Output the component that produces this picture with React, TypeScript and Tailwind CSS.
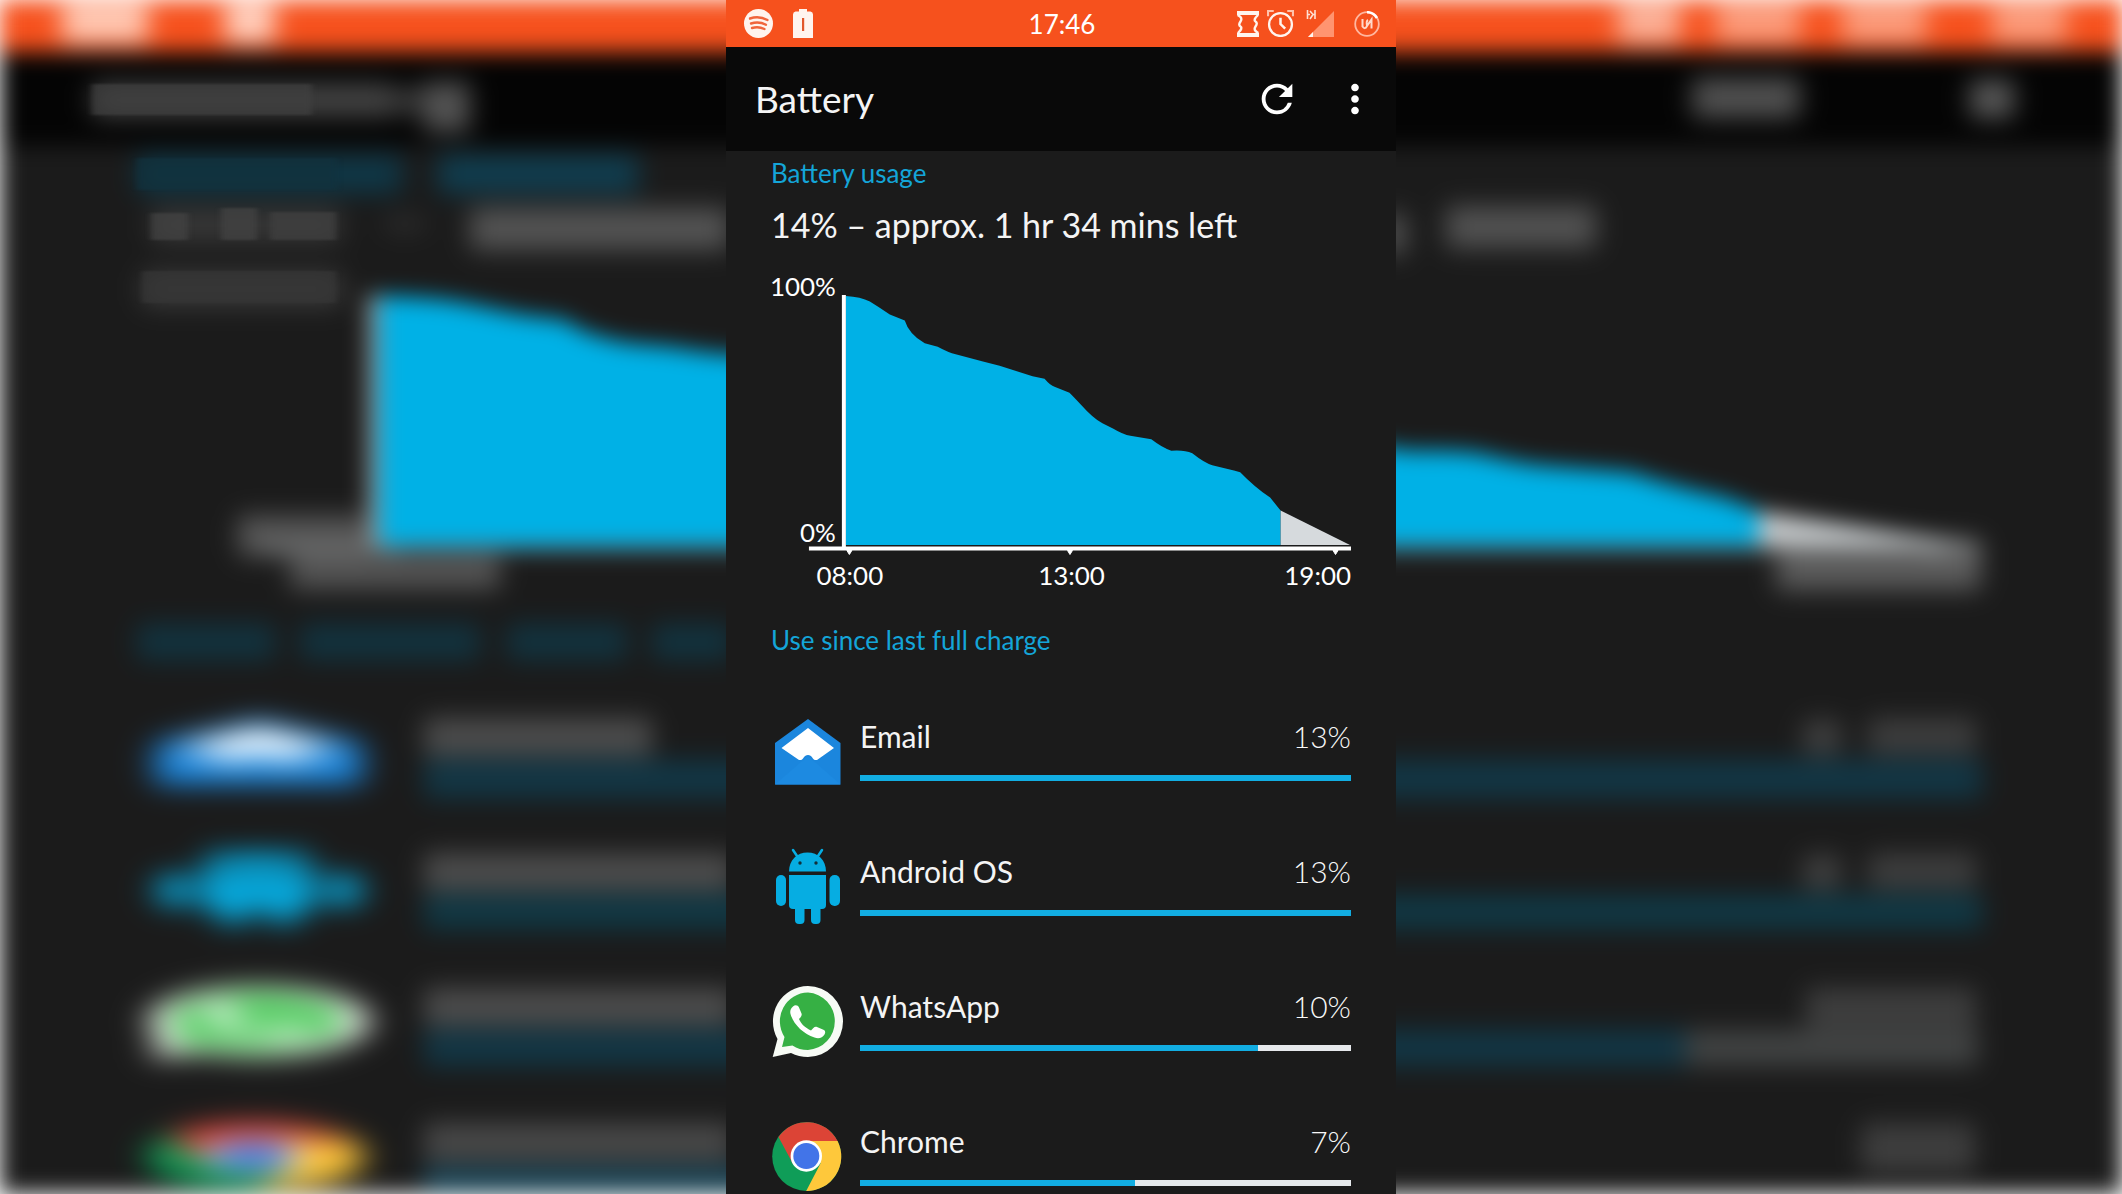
import type { ReactNode } from "react";
import { MdMoreVert, MdRefresh } from "react-icons/md";

/* ---------- Drawings shared by the screen and its blurred backdrop ---------- */

function EmailShape() {
  return (
    <>
      <path d="M37 3 69.5 27V68.5H4V27Z" fill="#1b86dd" />
      <path d="M4 68.5 37 40 69.5 68.5Z" fill="#1d8ae1" />
      <path d="M37 12 63 32 46 44H44C42 44 41 39 37 39S32 44 30 44H28L10.500 32Z" fill="#ffffff" />
    </>
  );
}

function AndroidShape() {
  return (
    <g fill="#06ade2">
      <path d="M22-1 26 5M51-1 47 5" stroke="#06ade2" strokeWidth="2.500" strokeLinecap="round" />
      <path d="M18 20.500C18 9 26 1.500 36.500 1.500S55 9 55 20.500Z" />
      <circle cx="29" cy="12" r="1.700" fill="#12303b" />
      <circle cx="45" cy="12" r="1.700" fill="#12303b" />
      <path d="M18 24H55V54a4 4 0 0 1-4 4H22a4 4 0 0 1-4-4Z" />
      <rect x="5" y="24" width="10" height="31" rx="5" />
      <rect x="58.500" y="24" width="10.500" height="31" rx="5" />
      <path d="M24 54H33.500V69a4 4 0 0 1-4 4H28a4 4 0 0 1-4-4Z" />
      <path d="M40 54H49.500V69a4 4 0 0 1-4 4H44a4 4 0 0 1-4-4Z" />
    </g>
  );
}

function WhatsAppShape({ green = "#36b044" }: { green?: string }) {
  return (
    <>
      <path
        d="M37 0A35 35.500 0 0 1 37 71C31 71 25 69.500 20 67L1.700 71 6.500 53A35 35.500 0 0 1 37 0Z"
        fill="#f7fbf5"
      />
      <path
        d="M37 6.500A28.500 28.800 0 0 1 37 64C31 64 26 62.500 21.500 59.500L11 61 13.500 51A28.500 28.800 0 0 1 37 6.500Z"
        fill={green}
      />
      <path
        d="M22 20.500C24 18.500 27 19 28 21.500L30.500 27.500C31.200 29.500 30 31 28 33 30 38 34.500 42 40 44.500 42 42.500 43.500 40 46 41L53 44C54.500 45 54.500 47 53.500 48.500 51.500 52 47.500 53 43.500 51.500 32 48 22 37.500 19.500 28 18.800 25 19.500 22.500 22 20.500Z"
        fill="#ffffff"
      />
    </>
  );
}

function ChromeShape() {
  return (
    <>
      <circle cx="35.700" cy="35.500" r="34.500" fill="#0f9d58" />
      <path d="M35.500 20H66.600A34.500 34.500 0 0 1 35.200 70L49.500 42.500Z" fill="#fec83b" />
      <path d="M7.500 16A34.500 34.500 0 0 1 66.600 20H35.500L22 43Z" fill="#dc4436" />
      <circle cx="35.300" cy="35" r="15.700" fill="#ffffff" />
      <circle cx="35.300" cy="35" r="13" fill="#4274e8" />
    </>
  );
}

function ChartShape({ axis = "#ffffff", estimate = "#d6dadd" }: { axis?: string; estimate?: string }) {
  return (
    <>
      <path
        d="M75 26 Q90 27 99 31.500 Q108 37 119 44.500 L134 50.500 Q138 64 154 73.500 L167 77 Q178 83 185 84.500 L229 96 262 106.500 274 109 Q280 116 284 117 L299 123 Q303 127 311 135.500 Q323 149 332 153.500 L343 159 Q353 165 360 166 L381 169.500 Q392 178 401 181 Q414 180 422 183.500 Q434 193 442 195.500 L470 202.500 Q484 217 500 228 L510.500 241V275.500H75Z"
        fill="#00b1e6"
      />
      <path d="M510.500 241 580 275.500H510.500Z" fill={estimate} />
      <path d="M71 25h4v252h-4ZM38 277h543v4H38Z" fill={axis} />
      <path d="M76 281h5l-2.500 4ZM297 281h5l-2.500 4ZM563 281h5l-2.500 4Z" fill={axis} stroke={axis} />
    </>
  );
}

/* ---------- Blurred, widened copy of the screen behind the phone ---------- */

type Blob = [x: number, y: number, width: number, height: number, fill: string];

const softBlobs: Blob[] = [
  [62, 2, 86, 40, "#ffcdb9"],
  [225, 2, 50, 40, "#ffd6c6"],
  [1618, 2, 62, 40, "#fbb59d"],
  [1716, 2, 84, 40, "#fb9f80"],
  [1842, 2, 84, 40, "#fb9f80"],
  [1992, 2, 74, 40, "#fb9f80"],
  [92, 83, 300, 34, "#454545"],
  [392, 88, 34, 26, "#3a3a3a"],
  [424, 82, 46, 50, "#545454"],
  [1692, 78, 108, 40, "#525252"],
  [1970, 80, 44, 38, "#5a5a5a"],
  [137, 155, 265, 38, "#0f3848"],
  [438, 155, 200, 38, "#103e50"],
  [151, 208, 190, 34, "#383838"],
  [385, 218, 40, 12, "#343434"],
  [470, 208, 260, 42, "#545454"],
  [1380, 214, 26, 40, "#545454"],
  [1446, 206, 150, 42, "#525252"],
  [142, 272, 200, 34, "#3c3c3c"],
  [238, 516, 132, 40, "#585858"],
  [290, 553, 210, 36, "#555555"],
  [1776, 540, 205, 50, "#5c5c5c"],
  [137, 624, 138, 36, "#12333f"],
  [300, 624, 180, 36, "#12333f"],
  [507, 624, 120, 36, "#12333f"],
  [652, 624, 80, 36, "#12333f"],
  [424, 718, 228, 38, "#4d4d4d"],
  [424, 853, 310, 38, "#4d4d4d"],
  [424, 988, 310, 38, "#4d4d4d"],
  [424, 1123, 310, 38, "#494949"],
  [1803, 720, 38, 34, "#404040"],
  [1868, 718, 108, 36, "#3e3e3e"],
  [1803, 855, 38, 34, "#404040"],
  [1868, 853, 108, 36, "#3e3e3e"],
  [1806, 988, 170, 40, "#3e3e3e"],
  [1861, 1123, 114, 50, "#3e3e3e"],
  [424, 760, 1558, 38, "#123746"],
  [424, 895, 1558, 34, "#103946"],
  [424, 1030, 1262, 36, "#123746"],
  [1686, 1030, 292, 36, "#424444"],
  [424, 1168, 450, 26, "#1c4c60"],
];

const crispBlobs: Blob[] = [
  [92, 84, 220, 31, "#414141"],
  [137, 158, 200, 32, "#12323e"],
  [151, 213, 37, 27, "#454545"],
  [221, 208, 36, 32, "#454545"],
  [270, 212, 66, 28, "#424242"],
  [142, 271, 194, 32, "#373737"],
];

const backdropIcons = [
  { y: 716, shape: <EmailShape /> },
  { y: 851, shape: <AndroidShape /> },
  { y: 986, shape: <WhatsAppShape green="#52cc60" /> },
  { y: 1121, shape: <ChromeShape /> },
];

function Blobs({ items }: { items: Blob[] }) {
  return (
    <>
      {items.map(([x, y, width, height, fill]) => (
        <rect key={`${x}-${y}`} x={x} y={y} width={width} height={height} fill={fill} />
      ))}
    </>
  );
}

function BlurFilter({ id, amount }: { id: string; amount: string }) {
  return (
    <filter
      id={id}
      filterUnits="userSpaceOnUse"
      x="-60"
      y="-60"
      width="2242"
      height="1314"
      colorInterpolationFilters="sRGB"
    >
      <feGaussianBlur stdDeviation={amount} />
    </filter>
  );
}

function Backdrop() {
  return (
    <svg
      aria-hidden="true"
      className="absolute inset-0 h-full w-full bg-white"
      viewBox="0 0 2122 1194"
      preserveAspectRatio="none"
    >
      <defs>
        <BlurFilter id="soft" amount="11" />
        <BlurFilter id="softer" amount="7" />
        <BlurFilter id="softest" amount="13 8" />
        <BlurFilter id="crisp" amount="3 1" />
        <clipPath id="frame">
          <rect width="2122" height="1194" />
        </clipPath>
      </defs>
      <g filter="url(#soft)">
        <g clipPath="url(#frame)">
          <rect width="2122" height="1194" fill="#1b1b1b" />
          <rect y="50" width="2122" height="96" fill="#040404" />
          <rect width="2122" height="52" fill="#f6511d" />
          <g filter="url(#softer)">
            <Blobs items={softBlobs} />
          </g>
          <svg x="142" y="270" width="1840" height="322" viewBox="0 0 581 322" preserveAspectRatio="none">
            <ChartShape axis="#8f9394" estimate="#c4c8ca" />
          </svg>
          <g filter="url(#softest)">
            {backdropIcons.map((icon) => (
              <svg
                key={icon.y}
                x="142"
                y={icon.y}
                width="228"
                height="72"
                viewBox="0 0 72 72"
                preserveAspectRatio="none"
                overflow="visible"
              >
                {icon.shape}
              </svg>
            ))}
          </g>
        </g>
      </g>
      <g filter="url(#crisp)" opacity="0.7">
        <Blobs items={crispBlobs} />
      </g>
    </svg>
  );
}

/* ---------- Status bar ---------- */

function StatusBar() {
  return (
    <div className="grid h-[47px] grid-cols-3 items-center bg-[#f6511d] pl-[18px] pr-4 text-white">
      <div className="flex items-center gap-5">
        <svg className="h-[29px] w-[29px]" viewBox="0 0 29 29" role="img" aria-label="Spotify">
          <circle cx="14.500" cy="14.500" r="14.500" fill="#fff4ee" />
          <path
            d="M6 9.500Q15 6.500 23.500 11M7 14.500Q15 12 22 15.800M8 19Q14.500 17.200 20.500 20"
            fill="none"
            stroke="#f0653c"
            strokeWidth="2.400"
            strokeLinecap="round"
          />
        </svg>
        <svg className="h-[29px] w-5" viewBox="0 0 20 29" role="img" aria-label="Battery low">
          <path d="M6 0H14V2.500H17.500Q20 3 20 5.500V29H0V5.500Q0 3 2.500 2.500H6Z" fill="#fff4ee" />
          <path d="M9 9H11.200V22H9Z" fill="#e2572b" />
        </svg>
      </div>
      <time className="text-center text-[26px] leading-8">17:46</time>
      <div className="flex items-center justify-end">
        <svg className="mr-2 h-[26px] w-[22px]" viewBox="0 0 22 26" role="img" aria-label="Vibrate">
          <path
            d="M1.500 2V4.500Q6 7 3.500 10.500T3.500 15.500T1.500 21.500V24H20.500V21.500Q16 19 18.500 15.500T18.500 10.500T20.500 4.500V2Z"
            fill="none"
            stroke="#fff4ee"
            strokeWidth="2.400"
          />
          <path d="M0 0H22V4H0ZM0 22H22V26H0Z" fill="#fff4ee" />
        </svg>
        <svg className="mr-3 h-[27px] w-[27px]" viewBox="0 0 26 26" role="img" aria-label="Alarm set">
          <circle cx="13" cy="14" r="11" fill="none" stroke="#fff4ee" strokeWidth="2.200" />
          <path d="M13 7.500V13.500L17.500 18" fill="none" stroke="#fff4ee" strokeWidth="2.400" />
          <path d="M1 6V1H6.500M25 6V1H19.500" fill="none" stroke="#ffc3ac" strokeWidth="2" />
        </svg>
        <svg className="mr-5 h-[27px] w-7" viewBox="0 0 28 27" role="img" aria-label="Mobile signal">
          <path d="M1.500 0V9M9 0V9M1.500 4.500H4M9 4.500H7L4 1M7 4.500 4 9" fill="none" stroke="#ffe0d3" strokeWidth="1.600" />
          <path d="M28 1V27H2Z" fill="#ff9470" />
          <path d="M7 22V27H2Z" fill="#fff4ee" />
        </svg>
        <svg className="h-[26px] w-[26px]" viewBox="0 0 26 26" role="img" aria-label="Battery 14 percent">
          <circle cx="13" cy="13" r="11.800" fill="none" stroke="#ffb7a0" strokeWidth="1.800" />
          <path d="M13 1.200A11.800 11.800 0 0 1 23 7" fill="none" stroke="#ffffff" strokeWidth="2.600" />
          <path d="M8.500 8V15.500Q11 19 13 15L17.500 8.500V17.500M13 15Q12 10 14 9" fill="none" stroke="#ffd9cb" strokeWidth="2" />
        </svg>
      </div>
    </div>
  );
}

/* ---------- Battery chart ---------- */

function BatteryChart() {
  return (
    <svg
      className="mt-[25px] block w-full overflow-visible fill-white text-[26px]"
      viewBox="0 0 581 322"
      role="img"
      aria-label="Battery level from 08:00 to 19:00"
    >
      <ChartShape />
      <text x="65" y="26" textAnchor="end">100%</text>
      <text x="65" y="272" textAnchor="end">0%</text>
      <text x="79" y="316" textAnchor="middle">08:00</text>
      <text x="301" y="316" textAnchor="middle">13:00</text>
      <text x="581" y="316" textAnchor="end">19:00</text>
    </svg>
  );
}

/* ---------- App usage rows ---------- */

interface Usage {
  name: string;
  percent: number;
  fill: number;
  icon: ReactNode;
}

const usages: Usage[] = [
  { name: "Email", percent: 13, fill: 100, icon: <EmailShape /> },
  { name: "Android OS", percent: 13, fill: 100, icon: <AndroidShape /> },
  { name: "WhatsApp", percent: 10, fill: 81, icon: <WhatsAppShape /> },
  { name: "Chrome", percent: 7, fill: 56, icon: <ChromeShape /> },
];

function UsageRow({ name, percent, fill, icon }: Usage) {
  return (
    <li className="flex gap-[17px]">
      <svg className="h-[72px] w-[72px] shrink-0 overflow-visible" viewBox="0 0 72 72" aria-hidden="true">
        {icon}
      </svg>
      <div className="min-w-0 flex-1">
        <div className="flex justify-between text-[30px] leading-10">
          <span>{name}</span>
          <span className="font-light text-[#f8f8f8]">{percent}%</span>
        </div>
        <div
          className="mt-[19px] h-[6px] bg-[#e6e9ec]"
          role="progressbar"
          aria-label={name}
          aria-valuenow={fill}
          aria-valuemin={0}
          aria-valuemax={100}
        >
          <div className="h-full bg-[#12ade2]" style={{ width: `${fill}%` }} />
        </div>
      </div>
    </li>
  );
}

export default function App() {
  return (
    <div className="relative min-h-screen overflow-hidden font-['Lato',sans-serif]">
      <Backdrop />
      <main className="relative mx-auto min-h-screen w-full max-w-[670px] bg-[#1b1b1b] text-[#f4f4f4]">
        <StatusBar />
        <header className="flex h-[104px] items-center justify-between bg-[#090909] pl-[29px] pr-[18px]">
          <h1 className="text-[37px] leading-10">Battery</h1>
          <div className="flex gap-8 text-[46px] text-white">
            <button type="button" aria-label="Refresh">
              <MdRefresh />
            </button>
            <button type="button" aria-label="More options">
              <MdMoreVert />
            </button>
          </div>
        </header>
        <div className="px-[45px] pt-[6px]">
          <h2 className="text-[26px] leading-8 text-[#14a5d8]">Battery usage</h2>
          <p className="mt-4 text-[34px] leading-10">14% – approx. 1 hr 34 mins left</p>
          <BatteryChart />
          <h2 className="mt-[33px] text-[26px] leading-8 text-[#14a5d8]">Use since last full charge</h2>
          <ul className="mt-[60px] flex flex-col gap-[63px]">
            {usages.map((usage) => (
              <UsageRow key={usage.name} {...usage} />
            ))}
          </ul>
        </div>
      </main>
    </div>
  );
}
